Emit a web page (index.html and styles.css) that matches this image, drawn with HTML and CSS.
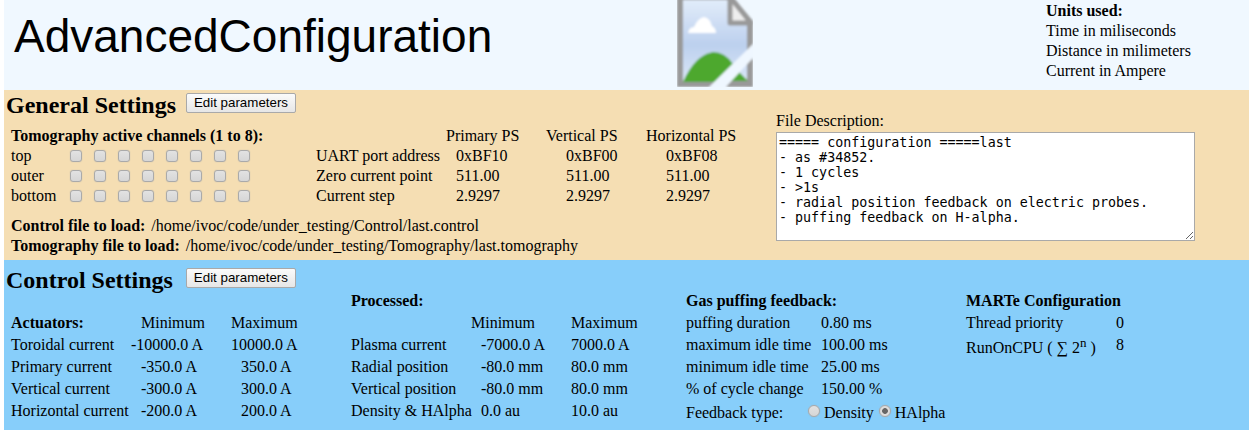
FILE: index.html
```html
<!DOCTYPE html>
<html lang="en">
<head>
<meta charset="utf-8">
<title>Advanced Configuration</title>
<link rel="stylesheet" href="styles.css">
</head>
<body>
<header class="top">
  <h1 class="title">AdvancedConfiguration</h1>
  <svg class="broken" viewBox="0 0 76 87" width="76" height="87" role="img" aria-label="Missing image">
    <defs>
      <linearGradient id="sky" x1="0" y1="0" x2="0" y2="1">
        <stop offset="0" stop-color="#e4eefb"/>
        <stop offset=".55" stop-color="#bcd0ee"/>
        <stop offset="1" stop-color="#dce8f8"/>
      </linearGradient>
      <filter id="soft" x="-5%" y="-5%" width="110%" height="110%"><feGaussianBlur stdDeviation="0.9"/></filter>
    </defs>
    <g filter="url(#soft)">
      <path d="M3 -3H52L73 22V84H3Z" fill="url(#sky)" stroke="#999" stroke-width="6"/>
      <path d="M53 -3V23H74Z" fill="#eee" stroke="#999" stroke-width="5" stroke-linejoin="round"/>
      <path d="M11 33Q12 27 17 27Q21 18 27 17Q33 18 35 26Q39 28 39 33Z" fill="#fff"/>
      <path d="M6 82Q18 55 36 52Q48 52 56 64L39 82Z" fill="#4ea82f"/>
      <path d="M53 81L61 71L71 81Z" fill="#4ea82f"/>
      <path d="M78 42L76 58L47 89H30Z" fill="#eff7ff"/>
    </g>
  </svg>
  <div class="units">
    <strong>Units used:</strong>
    <span>Time in miliseconds</span>
    <span>Distance in milimeters</span>
    <span>Current in Ampere</span>
  </div>
</header>

<section class="panel general">
  <div class="general-main">
    <div class="panel-head">
      <h2>General Settings</h2>
      <button class="edit" type="button">Edit parameters</button>
    </div>
    <div class="general-grids">
      <div class="channels">
        <strong class="channels-title">Tomography active channels (1 to 8):</strong>
        <span>top</span>
        <input class="chk" type="checkbox" disabled><input class="chk" type="checkbox" disabled><input class="chk" type="checkbox" disabled><input class="chk" type="checkbox" disabled><input class="chk" type="checkbox" disabled><input class="chk" type="checkbox" disabled><input class="chk" type="checkbox" disabled><input class="chk" type="checkbox" disabled>
        <span>outer</span>
        <input class="chk" type="checkbox" disabled><input class="chk" type="checkbox" disabled><input class="chk" type="checkbox" disabled><input class="chk" type="checkbox" disabled><input class="chk" type="checkbox" disabled><input class="chk" type="checkbox" disabled><input class="chk" type="checkbox" disabled><input class="chk" type="checkbox" disabled>
        <span>bottom</span>
        <input class="chk" type="checkbox" disabled><input class="chk" type="checkbox" disabled><input class="chk" type="checkbox" disabled><input class="chk" type="checkbox" disabled><input class="chk" type="checkbox" disabled><input class="chk" type="checkbox" disabled><input class="chk" type="checkbox" disabled><input class="chk" type="checkbox" disabled>
      </div>
      <div class="supplies">
        <span></span><span>Primary PS</span><span>Vertical PS</span><span>Horizontal PS</span>
        <span>UART port address</span><span class="val">0xBF10</span><span class="val">0xBF00</span><span class="val">0xBF08</span>
        <span>Zero current point</span><span class="val">511.00</span><span class="val">511.00</span><span class="val">511.00</span>
        <span>Current step</span><span class="val">2.9297</span><span class="val">2.9297</span><span class="val">2.9297</span>
      </div>
    </div>
    <div class="files">
      <div><strong>Control file to load:</strong><span class="path">/home/ivoc/code/under_testing/Control/last.control</span></div>
      <div><strong>Tomography file to load:</strong><span class="path">/home/ivoc/code/under_testing/Tomography/last.tomography</span></div>
    </div>
  </div>
  <div class="description">
    <label for="desc">File Description:</label>
    <textarea id="desc" class="desc" readonly>===== configuration =====last
- as #34852.
- 1 cycles
- &gt;1s
- radial position feedback on electric probes.
- puffing feedback on H-alpha.</textarea>
  </div>
</section>

<section class="panel control">
  <div class="panel-head">
    <h2>Control Settings</h2>
    <button class="edit" type="button">Edit parameters</button>
  </div>
  <div class="control-cols">
    <div class="block actuators">
      <strong>Actuators:</strong><span>Minimum</span><span>Maximum</span>
      <span>Toroidal current</span><span class="neg5">-10000.0 A</span><span>10000.0 A</span>
      <span>Primary current</span><span>-350.0 A</span><span class="in">350.0 A</span>
      <span>Vertical current</span><span>-300.0 A</span><span class="in">300.0 A</span>
      <span>Horizontal current</span><span>-200.0 A</span><span class="in">200.0 A</span>
    </div>
    <div class="block processed">
      <strong class="span3">Processed:</strong>
      <span></span><span>Minimum</span><span>Maximum</span>
      <span>Plasma current</span><span class="in">-7000.0 A</span><span>7000.0 A</span>
      <span>Radial position</span><span class="in">-80.0 mm</span><span>80.0 mm</span>
      <span>Vertical position</span><span class="in">-80.0 mm</span><span>80.0 mm</span>
      <span>Density &amp; HAlpha</span><span class="in">0.0 au</span><span>10.0 au</span>
    </div>
    <div class="block gas">
      <strong class="span2">Gas puffing feedback:</strong>
      <span>puffing duration</span><span>0.80 ms</span>
      <span>maximum idle time</span><span>100.00 ms</span>
      <span>minimum idle time</span><span>25.00 ms</span>
      <span>% of cycle change</span><span>150.00 %</span>
      <div class="span2 feedback">
        <span class="fb-label">Feedback type:</span>
        <label class="opt"><input class="rad" type="radio" name="fb" disabled>Density</label>
        <label class="opt"><input class="rad" type="radio" name="fb" disabled checked>HAlpha</label>
      </div>
    </div>
    <div class="block marte">
      <strong class="span2">MARTe Configuration</strong>
      <span>Thread priority</span><span>0</span>
      <span class="cpu">RunOnCPU ( ∑ 2<sup>n</sup> )</span><span>8</span>
    </div>
  </div>
</section>
</body>
</html>
```

FILE: styles.css
```css
html, body { margin: 0; padding: 0; }
body {
  margin-left: 4px;
  font: 16px/20px "Liberation Serif", serif;
  color: #000;
  overflow: hidden;
  white-space: nowrap;
}
.top {
  display: grid;
  grid-template-columns: 673px 369px 1fr;
  height: 90px;
  background: #f0f8ff;
  overflow: hidden;
}
.title {
  margin: 0;
  padding: 10px 0 0 10px;
  font: 400 46px/53px "Liberation Sans", sans-serif;
}
.broken { display: block; }
.units {
  display: flex;
  flex-direction: column;
  padding-top: 1px;
}
.panel { overflow: hidden; }
.general {
  display: grid;
  grid-template-columns: 772px 1fr;
  height: 170px;
  background: #f5deb3;
}
.control {
  height: 170px;
  background: #87cefa;
}
.panel-head {
  display: flex;
  align-items: flex-start;
  padding: 3px 0 0 2px;
  height: 30px;
  box-sizing: border-box;
}
.control .panel-head { padding-top: 8px; }
h2 {
  margin: 0;
  font: 700 24px/25px "Liberation Serif", serif;
}
.edit {
  margin-left: 10px;
  width: 110px;
  height: 20px;
  padding: 0;
  box-sizing: border-box;
  border: 1px solid #a9a9a9;
  border-radius: 2px;
  background: linear-gradient(#fbfbfb, #e6e6e6);
  color: #000;
  font: 13.333px/16px "Liberation Sans", sans-serif;
}
.control .edit { margin-left: 13px; }
.general-grids {
  display: flex;
  padding: 6px 0 0 7px;
}
.channels {
  display: grid;
  grid-template-columns: 59px repeat(8, 24px);
  grid-auto-rows: 20px;
  align-items: center;
  width: 305px;
}
.channels-title { grid-column: 1 / -1; }
.chk, .rad {
  appearance: none;
  -webkit-appearance: none;
  box-sizing: border-box;
  margin: 0;
  border: 1px solid #aaa;
  background: linear-gradient(#e2e2e2, #d6d6d6);
  box-shadow: 0 0 1px #aaa;
}
.chk {
  width: 12px;
  height: 12px;
  border-radius: 3px;
}
.supplies {
  display: grid;
  grid-template-columns: 130px 100px 100px 100px;
  grid-auto-rows: 20px;
}
.supplies .val { padding-left: 10px; }
.supplies .val:nth-child(4n+3), .supplies .val:nth-child(4n) { padding-left: 20px; }
.files {
  padding: 10px 0 0 7px;
}
.path { margin-left: 6px; }
.description {
  display: flex;
  flex-direction: column;
  align-items: flex-start;
  padding-top: 20px;
}
.description label { line-height: 22px; height: 22px; }
.desc {
  display: block;
  box-sizing: border-box;
  width: 419px;
  height: 109px;
  margin: 0;
  padding: 2px;
  border: 1px solid #a9a9a9;
  border-radius: 0;
  outline: none;
  background: #fff;
  color: #000;
  font: 13.333px/15px "DejaVu Sans Mono", monospace;
  white-space: pre;
}
.control-cols {
  display: grid;
  grid-template-columns: 340px 335px 280px 1fr;
  padding: 0 0 0 7px;
}
.block {
  display: grid;
  grid-auto-rows: 22px;
  align-items: center;
  align-content: start;
}
.span2 { grid-column: span 2; }
.span3 { grid-column: span 3; }
.actuators {
  grid-template-columns: 130px 90px 90px;
  padding-top: 22px;
}
.actuators .neg5 { margin-left: -10px; }
.in { padding-left: 10px; }
.processed { grid-template-columns: 120px 100px 100px; }
.gas { grid-template-columns: 135px 1fr; }
.marte { grid-template-columns: 150px 1fr; }
.cpu { padding-top: 5px; }
sup { font-size: 13px; line-height: 0; }
.feedback {
  display: flex;
  align-items: center;
  padding-top: 3px;
}
.fb-label { width: 122px; }
.opt { display: inline-flex; align-items: center; margin-right: 5px; }
.rad {
  width: 12px;
  height: 12px;
  margin-right: 4px;
  border-radius: 50%;
  position: relative;
  top: -2px;
}
.rad:checked {
  background: radial-gradient(circle, #666 0 2.5px, #ddd 3.2px);
}
```
